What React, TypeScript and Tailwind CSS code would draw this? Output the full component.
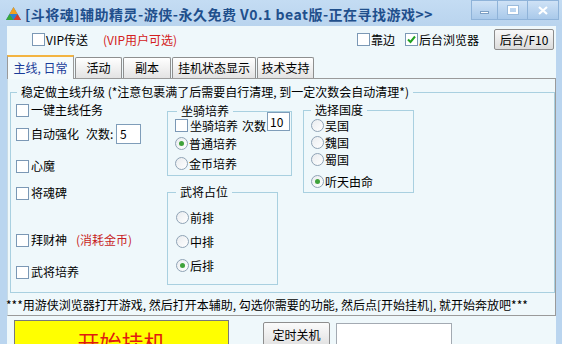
import React from "react";

const Cb = ({ checked = false }: { checked?: boolean }) => (
  <span className="w-[13px] h-[13px] shrink-0 border border-[#7b98b5] bg-white flex items-center justify-center">
    {checked && (
      <svg width="9" height="9" viewBox="0 0 9 9">
        <path d="M1 4.5 L3.5 7 L8 1.5" stroke="#21a121" strokeWidth="2" fill="none" />
      </svg>
    )}
  </span>
);

const Rd = ({ checked = false }: { checked?: boolean }) => (
  <span className="w-[13px] h-[13px] shrink-0 rounded-full border border-[#8fa3b5] bg-gradient-to-br from-[#e9ecef] to-white flex items-center justify-center">
    {checked && <span className="w-[5px] h-[5px] rounded-full bg-[#3fa23a]" />}
  </span>
);

const RadioRow = ({ label, checked, cls }: { label: string; checked?: boolean; cls: string }) => (
  <div className={`flex items-center h-[13px] ${cls}`}>
    <Rd checked={checked} />
    <span className="ml-[1px] leading-[13px]">{label}</span>
  </div>
);

const CbRow = ({ label, cls, children }: { label: string; cls: string; children?: React.ReactNode }) => (
  <div className={`flex items-center h-[20px] ${cls}`}>
    <Cb />
    <span className="ml-[2px]">{label}</span>
    {children}
  </div>
);

export default function App() {
  return (
    <div className="w-[562px] h-[344px] overflow-hidden bg-[#bad5ef] flex flex-col text-[12px] leading-[14px] text-black font-['Noto_Sans_CJK_SC','Noto_Sans',sans-serif]">
      {/* title bar */}
      <div className="h-[26px] shrink-0 flex items-start bg-gradient-to-b from-[#c4dcf3] to-[#b9d4ee]">
        <div className="flex items-center pl-[5px] pt-[6px]">
          <svg width="17" height="16" viewBox="0 0 17 16">
            <path d="M8.5 1 L16 14 L1 14 Z" fill="#2f7fd0" />
            <path d="M8.5 1 L12.5 8 L4.5 8 Z" fill="#f0a020" />
            <path d="M4.5 8 L8.5 14 L1 14 Z" fill="#3aa83a" />
            <path d="M12.5 8 L16 14 L8.5 14 Z" fill="#d83a2a" />
          </svg>
          <span className="ml-[3px] text-[14px] leading-[16px] font-bold text-[#1f4f8c] tracking-[0.5px]">
            [斗将魂]辅助精灵-游侠-永久免费 V0.1 beat版-正在寻找游戏&gt;&gt;
          </span>
        </div>
        <div className="ml-auto mr-[3px] flex h-[20px]">
          <div className="w-[27px] h-[20px] border border-[#8fb3d9] bg-gradient-to-b from-[#cfe2f6] to-[#a9c9ea] flex items-end justify-center pb-[5px]">
            <span className="w-[9px] h-[3px] bg-white border border-[#7d9fc4]" />
          </div>
          <div className="w-[30px] h-[20px] border-y border-r border-[#8fb3d9] bg-gradient-to-b from-[#cfe2f6] to-[#a9c9ea] flex items-center justify-center">
            <span className="w-[10px] h-[8px] border-2 border-white outline outline-1 outline-[#9bbbdc]" />
          </div>
          <div className="w-[31px] h-[20px] border-y border-r border-[#8fb3d9] bg-gradient-to-b from-[#cfe2f6] to-[#a9c9ea] flex items-center justify-center">
            <svg width="10" height="9" viewBox="0 0 10 9">
              <path d="M1 1 L9 8 M9 1 L1 8" stroke="#ffffff" strokeWidth="2.2" />
            </svg>
          </div>
        </div>
      </div>

      {/* body */}
      <div className="flex-1 flex min-h-0">
        <div className="w-[7px] shrink-0" />
        <div className="w-[549px] shrink-0 bg-[#eff8fb] flex flex-col">
          {/* row 1 */}
          <div className="h-[27px] shrink-0 flex items-center">
            <div className="w-[350px] flex items-center pl-[25px]">
              <div className="w-[71px] flex items-center">
                <Cb />
                <span className="ml-[1px]">VIP传送</span>
              </div>
              <span className="text-[#d42020]">(VIP用户可选)</span>
            </div>
            <div className="w-[48px] flex items-center">
              <Cb />
              <span className="ml-[1px]">靠边</span>
            </div>
            <div className="w-[89px] flex items-center">
              <Cb checked />
              <span className="ml-[1px]">后台浏览器</span>
            </div>
            <div className="w-[60px] h-[21px] border border-[#8c8c8c] rounded-[2px] bg-gradient-to-b from-[#f8f8f8] to-[#dcdcdc] flex items-center justify-center">
              后台/F10
            </div>
          </div>

          {/* tabs */}
          <div className="h-[25px] shrink-0 flex items-end relative z-10">
            <div className="w-[67px] h-[24px] -mb-px border-t-2 border-t-[#f3b442] border-x border-x-[#9a9a9a] bg-[#f4fafc] flex items-center justify-center text-[#1a3c99]">
              主线, 日常
            </div>
            <div className="ml-[1px] w-[47px] h-[21px] border border-b-0 border-[#8e8f8f] rounded-t-[2px] bg-gradient-to-b from-white to-[#e3e3e3] flex items-center justify-center">
              活动
            </div>
            <div className="ml-[1px] w-[48px] h-[21px] border border-b-0 border-[#8e8f8f] rounded-t-[2px] bg-gradient-to-b from-white to-[#e3e3e3] flex items-center justify-center">
              副本
            </div>
            <div className="ml-[1px] w-[84px] h-[21px] border border-b-0 border-[#8e8f8f] rounded-t-[2px] bg-gradient-to-b from-white to-[#e3e3e3] flex items-center justify-center">
              挂机状态显示
            </div>
            <div className="ml-[1px] w-[57px] h-[21px] border border-b-0 border-[#8e8f8f] rounded-t-[2px] bg-gradient-to-b from-white to-[#e3e3e3] flex items-center justify-center">
              技术支持
            </div>
          </div>

          {/* tab page */}
          <div className="h-[238px] shrink-0 border border-[#9a9a9a] border-l-[#c9dbe6] flex flex-col">
            <fieldset className="ml-[2px] mt-[6px] w-[545px] h-[208px] border border-[#a9d0e0] flex">
              <legend className="ml-[6px] px-[4px] leading-[14px]">
                稳定做主线升级 (*注意包裹满了后需要自行清理, 到一定次数会自动清理*)
              </legend>
              <div className="flex pl-[5px]">
                {/* left column */}
                <div className="w-[151px] flex flex-col">
                  <CbRow label="一键主线任务" cls="mt-[1px]" />
                  <div className="flex items-center h-[20px] mt-[4px]">
                    <Cb />
                    <span className="ml-[2px] w-[55px]">自动强化</span>
                    <span className="w-[30px]">次数:</span>
                    <span className="w-[25px] h-[20px] border border-[#7f9db9] bg-white pl-[3px] leading-[18px]">5</span>
                  </div>
                  <CbRow label="心魔" cls="mt-[12px]" />
                  <CbRow label="将魂碑" cls="mt-[7px]" />
                  <div className="flex items-center h-[20px] mt-[27px]">
                    <Cb />
                    <span className="ml-[2px] w-[45px]">拜财神</span>
                    <span className="text-[#c81e1e]">(消耗金币)</span>
                  </div>
                  <CbRow label="武将培养" cls="mt-[12px]" />
                </div>

                {/* middle column */}
                <div className="w-[125px] flex flex-col">
                  <fieldset className="mt-[5px] w-[125px] h-[72px] border border-[#a9d0e0]">
                    <legend className="ml-[9px] px-[4px] leading-[14px]">坐骑培养</legend>
                    <div className="flex items-start h-[13px] pl-[7px] mt-[1px]">
                      <Cb />
                      <span className="ml-[2px] w-[52px] leading-[13px]">坐骑培养</span>
                      <span className="w-[25px] leading-[13px]">次数</span>
                      <span className="w-[23px] h-[19px] -mt-[7px] border border-[#7f9db9] bg-white pl-[2px] leading-[17px]">10</span>
                    </div>
                    <RadioRow label="普通培养" checked cls="mt-[5px] pl-[7px]" />
                    <RadioRow label="金币培养" cls="mt-[7px] pl-[7px]" />
                  </fieldset>
                  <fieldset className="mt-[9px] w-[111px] h-[100px] border border-[#a9d0e0]">
                    <legend className="ml-[8px] px-[4px] leading-[14px]">武将占位</legend>
                    <RadioRow label="前排" cls="mt-[12px] pl-[8px]" />
                    <RadioRow label="中排" cls="mt-[11px] pl-[8px]" />
                    <RadioRow label="后排" checked cls="mt-[11px] pl-[8px]" />
                  </fieldset>
                </div>

                {/* right column */}
                <div className="ml-[11px] flex flex-col">
                  <fieldset className="mt-[4px] w-[111px] h-[90px] border border-[#a9d0e0]">
                    <legend className="ml-[7px] px-[4px] leading-[14px]">选择国度</legend>
                    <RadioRow label="吴国" cls="mt-[2px] pl-[7px]" />
                    <RadioRow label="魏国" cls="mt-[4px] pl-[7px]" />
                    <RadioRow label="蜀国" cls="mt-[4px] pl-[7px]" />
                    <RadioRow label="听天由命" checked cls="mt-[9px] pl-[7px]" />
                  </fieldset>
                </div>
              </div>
            </fieldset>
            <div className="pt-[5px] -ml-[2px] leading-[14px] whitespace-nowrap">
              ***用游侠浏览器打开游戏, 然后打开本辅助, 勾选你需要的功能, 然后点[开始挂机], 就开始奔放吧***
            </div>
          </div>

          {/* bottom */}
          <div className="flex items-start">
            <div className="ml-[7px] mt-[4px] w-[215px] h-[42px] shrink-0 border border-[#7a7a7a] bg-[#ffff00] flex items-center justify-center text-[22px] leading-[26px] text-[#e01a10]">
              开始挂机
            </div>
            <div className="ml-[34px] mt-[6px] w-[67px] h-[25px] shrink-0 border border-[#8e8e8e] rounded-[2px] bg-gradient-to-b from-[#fbfbfb] to-[#e1e1e1] flex items-center justify-center">
              定时关机
            </div>
            <div className="ml-[6px] mt-[7px] w-[116px] h-[24px] shrink-0 border border-[#a3aab2] bg-white" />
          </div>
        </div>
        <div className="w-[6px] shrink-0" />
      </div>
    </div>
  );
}
